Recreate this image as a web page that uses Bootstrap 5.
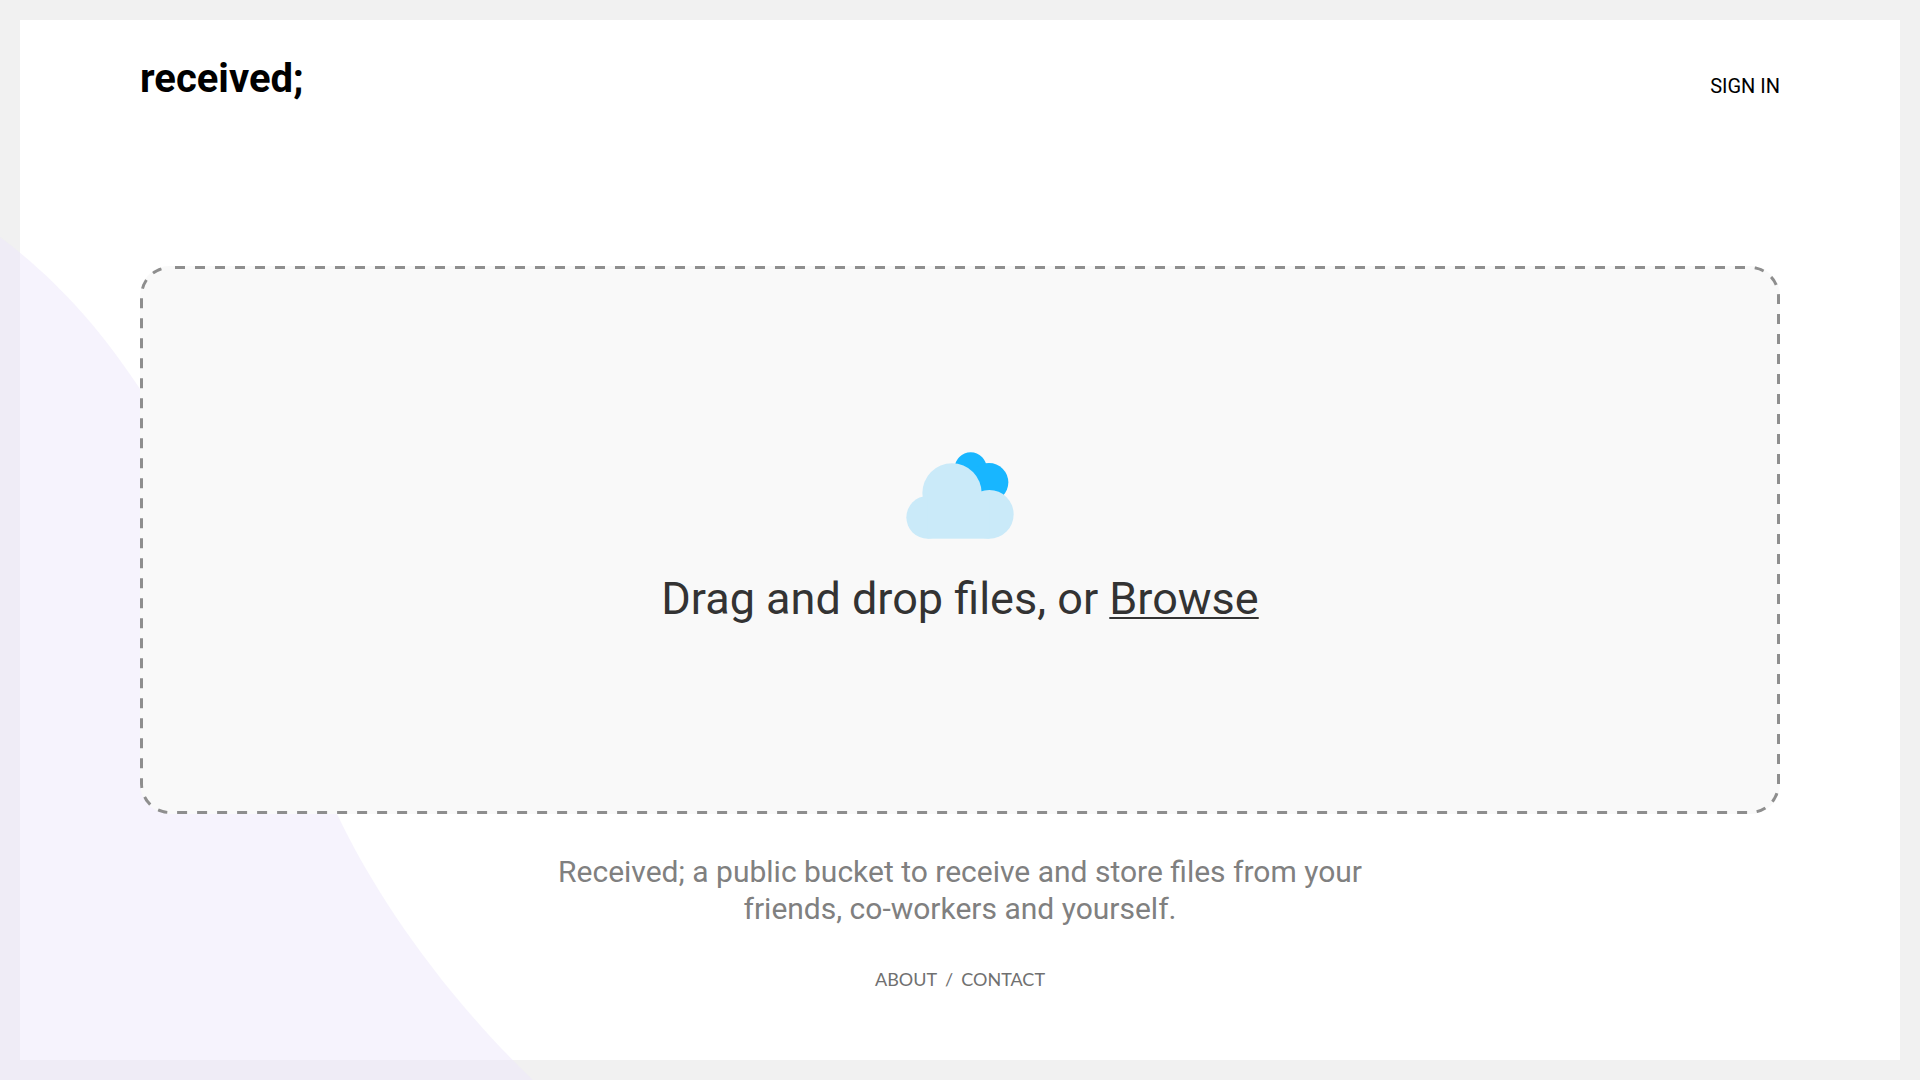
<!DOCTYPE html>
<html lang="en">
<head>
<meta charset="utf-8">
<meta name="viewport" content="width=device-width, initial-scale=1">
<title>received;</title>
<link href="https://cdn.jsdelivr.net/npm/bootstrap@5.3.0/dist/css/bootstrap.min.css" rel="stylesheet">
<style>
  body { font-family: Roboto, sans-serif; color: #333; }
  .page-frame { border: 20px solid #f1f1f1; padding: 0 120px; }
  .site-bar { padding: 36px 0 0; min-height: 117px; }
  .brand-name { font-size: 40px; line-height: 46px; }
  .sign-link { font-size: 20px; line-height: 28px; }
  .wave { left: 0; bottom: 0; width: 533px; height: 843px; }
  .drop-zone {
    min-height: 548px;
    margin-top: 129px;
    padding-bottom: 2px;
    border-radius: 30px;
    background-color: #f9f9f9;
    background-image: url("data:image/svg+xml,%3Csvg xmlns='http://www.w3.org/2000/svg' width='100%25' height='100%25'%3E%3Crect width='100%25' height='100%25' rx='30' ry='30' fill='none' stroke='%238e8e8e' stroke-width='6' stroke-dasharray='10' stroke-dashoffset='-5'/%3E%3C/svg%3E");
  }
  .drop-text { font-size: 45px; line-height: 56px; margin-top: 32px; }
  .browse-label { cursor: pointer; text-decoration: underline 2px; text-underline-offset: 3px; }
  .intro { font-size: 30px; line-height: 37px; max-width: 840px; margin-top: 39px; color: #808080; }
  .foot-links { font-family: Lato, sans-serif; font-size: 18px; line-height: 24px; margin-top: 40px; color: #707070; }
</style>
</head>
<body>
<div class="page-frame position-relative min-vh-100 d-flex flex-column">
  <header class="site-bar d-flex justify-content-between align-items-start">
    <a class="brand-name fw-bold text-black text-decoration-none" href="#">received;</a>
    <a class="sign-link text-black text-decoration-none mt-3" href="#">SIGN IN</a>
  </header>

  <main class="position-relative z-1">
    <section class="drop-zone d-flex flex-column align-items-center justify-content-center">
      <svg width="108" height="87" viewBox="77 63 324 261" aria-hidden="true">
        <g fill="#18b6ff"><circle cx="271" cy="112" r="48"/><circle cx="326" cy="154" r="58"/></g>
        <g fill="#caeaf9"><circle cx="142" cy="259" r="64"/><circle cx="215" cy="186" r="89"/><circle cx="327" cy="250" r="73"/><rect x="142" y="190" width="185" height="133"/></g>
      </svg>
      <p class="drop-text mb-0">Drag and drop files, or <label class="browse-label" for="files">Browse</label></p>
      <input class="visually-hidden" type="file" id="files" multiple>
    </section>
    <p class="intro mx-auto mb-0 text-center">Received; a public bucket to receive and store files from your friends, co-workers and yourself.</p>
  </main>

  <footer class="foot-links position-relative z-1 d-flex justify-content-center gap-2">
    <a class="text-reset text-decoration-none" href="#">ABOUT</a><span>/</span><a class="text-reset text-decoration-none" href="#">CONTACT</a>
  </footer>
</div>
<svg class="wave position-absolute" viewBox="0 0 533 843" aria-hidden="true">
  <path d="M0 0C52 39 98 88 140 152C235 290 262 410 337 577C378 664 450 764 533 843H0Z" fill="#ede7fb" fill-opacity=".5"/>
</svg>
<script src="https://cdn.jsdelivr.net/npm/bootstrap@5.3.0/dist/js/bootstrap.bundle.min.js"></script>
</body>
</html>
